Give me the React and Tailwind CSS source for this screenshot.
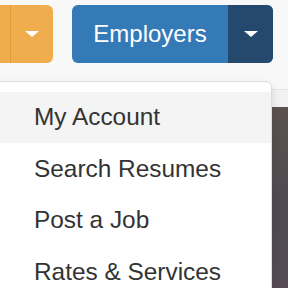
import React from 'react';

const Caret = () => (
    <span className="block w-0 h-0 border-l-[7px] border-r-[7px] border-t-[6px] border-l-transparent border-r-transparent border-t-white"></span>
);

const items = ['My Account', 'Search Resumes', 'Post a Job', 'Rates & Services'];

const App = () => {
    return (
        <div className="relative w-[288px] h-[288px] overflow-hidden bg-[#f8f8f8] font-['Liberation_Sans',Arial,sans-serif]">
            {/* nav bar */}
            <div className="h-[90px] border-b border-[#e4e4e4] pt-[5px] flex gap-[19px]">
                <div className="flex h-[58px] -ml-[89px] rounded-[6px] overflow-hidden bg-[#f0ad4e]">
                    <div className="w-[100px] border-r border-[#e39b35]"></div>
                    <div className="w-[42px] flex items-center justify-center">
                        <Caret />
                    </div>
                </div>
                <div className="flex h-[58px] w-[201px] rounded-[6px] overflow-hidden bg-[#337ab7]">
                    <div className="flex-1 flex items-center justify-center text-white text-[24px]">Employers</div>
                    <div className="w-[45px] bg-[#24496d] flex items-center justify-center">
                        <Caret />
                    </div>
                </div>
            </div>
            <div className="h-[17px] bg-[#f2f2f2]"></div>
            <div className="h-[200px] bg-gradient-to-b from-[#5b524e] via-[#4d4b51] to-[#584b57]"></div>

            {/* dropdown menu */}
            <div className="absolute top-[81px] -left-[2px] w-[274px] h-[230px] bg-white border border-[#dcdcdc] rounded-tr-[6px] shadow-[0_4px_10px_rgba(0,0,0,0.12)] pt-[10px]">
                {items.map((item, i) => (
                    <div
                        key={item}
                        className={`h-[51.4px] flex items-center pl-[35px] text-[24.4px] text-[#333] ${i === 0 ? 'bg-[#f4f4f4]' : ''}`}
                    >
                        {item}
                    </div>
                ))}
            </div>
        </div>
    );
};

export default App;
